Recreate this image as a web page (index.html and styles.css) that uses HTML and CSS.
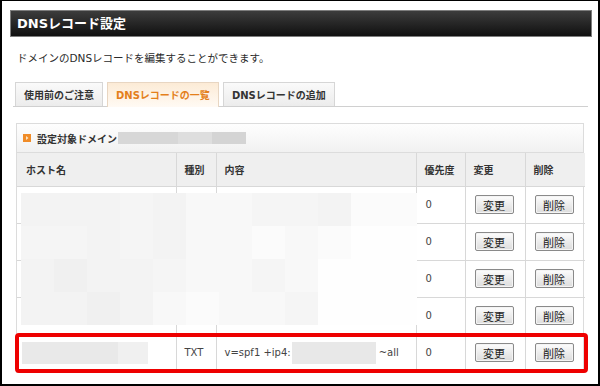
FILE: index.html
```html
<!DOCTYPE html>
<html lang="ja">
<head>
<meta charset="utf-8">
<title>DNSレコード設定</title>
<link rel="stylesheet" href="styles.css">
</head>
<body>
<div class="page">
  <h1 class="title">DNSレコード設定</h1>
  <p class="desc">ドメインのDNSレコードを編集することができます。</p>
  <div class="tabs">
    <span class="tab">使用前のご注意</span>
    <span class="tab active">DNSレコードの一覧</span>
    <span class="tab">DNSレコードの追加</span>
  </div>
  <div class="panel">
    <div class="domain">
      <svg class="mark" width="8" height="8" viewBox="0 0 8 8"><rect x="0" y="0" width="8" height="8" fill="#f08c28"/><path d="M3 2 L5.5 4 L3 6 Z" fill="#ffe3c2"/></svg>
      <span class="domain-label">設定対象ドメイン</span>
      <span class="redact"><span class="r1"></span><span class="r2"></span><span class="r3"></span></span>
    </div>
    <table class="records">
      <colgroup>
        <col class="c-host"><col class="c-type"><col class="c-val"><col class="c-prio"><col class="c-edit"><col class="c-del">
      </colgroup>
      <thead>
        <tr><th>ホスト名</th><th>種別</th><th>内容</th><th>優先度</th><th>変更</th><th>削除</th></tr>
      </thead>
      <tbody>
        <tr><td></td><td></td><td></td><td class="num">0</td><td><button class="btn">変更</button></td><td><button class="btn">削除</button></td></tr>
        <tr><td></td><td></td><td></td><td class="num">0</td><td><button class="btn">変更</button></td><td><button class="btn">削除</button></td></tr>
        <tr><td></td><td></td><td></td><td class="num">0</td><td><button class="btn">変更</button></td><td><button class="btn">削除</button></td></tr>
        <tr><td></td><td></td><td></td><td class="num">0</td><td><button class="btn">変更</button></td><td><button class="btn">削除</button></td></tr>
        <tr>
          <td><span class="hostblur"><span class="h1"></span><span class="h2"></span></span></td>
          <td class="txt">TXT</td>
          <td class="txt"><span class="spf">v=spf1 +ip4:<span class="ipblur"></span>~all</span></td>
          <td class="num">0</td>
          <td><button class="btn">変更</button></td>
          <td><button class="btn">削除</button></td>
        </tr>
      </tbody>
    </table>
    <div class="mosaic">
      <i class="g2"></i><i class="g2"></i><i class="g2"></i><i class="g3"></i><i class="g2"></i><i class="g4"></i><i class="g4"></i><i class="g3"></i><i class="g3"></i><i class="g2"></i><i class="g5"></i><i class="g5"></i>
      <i class="g3"></i><i class="g3"></i><i class="g2"></i><i class="g3"></i><i class="g2"></i><i class="g4"></i><i class="g4"></i><i class="g5"></i><i class="g4"></i><i class="g5"></i><i class="g6"></i><i class="g6"></i>
      <i class="g2"></i><i class="g1"></i><i class="g2"></i><i class="g2"></i><i class="g3"></i><i class="g4"></i><i class="g4"></i><i class="g3"></i><i class="g4"></i><i class="g6"></i><i class="g6"></i><i class="g6"></i>
      <i class="g2"></i><i class="g2"></i><i class="g1"></i><i class="g2"></i><i class="g4"></i><i class="g5"></i><i class="g4"></i><i class="g4"></i><i class="g3"></i><i class="g6"></i><i class="g6"></i><i class="g6"></i>
    </div>
    <div class="highlight"></div>
  </div>
</div>
</body>
</html>
```
FILE: styles.css
```css
* { box-sizing: border-box; }
html, body { margin: 0; padding: 0; background: #fff; }
body {
  width: 600px;
  height: 386px;
  border: 2px solid #000;
  border-top-width: 1px;
  font-family: "DejaVu Sans", "Noto Sans CJK JP", sans-serif;
  font-size: 10px;
  color: #333;
  overflow: hidden;
}
.page {
  padding: 9px 6px 0 8px;
}
.title {
  margin: 0;
  height: 27px;
  line-height: 25px;
  padding-left: 6px;
  border: 1px solid #7d7d7d;
  background: linear-gradient(#3c3c3c, #101010);
  color: #fff;
  font-size: 13px;
  font-weight: bold;
}
.desc {
  margin: 15px 0 0 0;
  padding-left: 7px;
  line-height: 12px;
  font-size: 10.5px;
  color: #2a2a2a;
}
.tabs {
  margin: 18px 4px 0 3px;
  padding-left: 2px;
  display: flex;
  gap: 4px;
  border-bottom: 1px solid #d0d0d0;
  height: 25px;
  align-items: flex-end;
}
.tab {
  height: 24px;
  line-height: 23px;
  padding: 1px 8px 0 8px;
  border: 1px solid #d6d6d6;
  border-bottom: none;
  background: linear-gradient(#fafafa, #ececec);
  font-weight: bold;
  color: #333;
  font-size: 10px;
}
.tab.active {
  background: linear-gradient(#fcebd6, #fffaf4);
  border-color: #e8d6c2;
  color: #e47f1b;
  height: 25px;
  margin-bottom: -1px;
  padding-top: 1px;
  line-height: 24px;
}
.panel {
  position: relative;
  margin: 16px 8px 0 6px;
  border: 1px solid #dcdcdc;
}
.domain {
  height: 29px;
  display: flex;
  align-items: center;
  padding-left: 6px;
  background: linear-gradient(#fefefe, #f1f1f1);
  border-bottom: 1px solid #dcdcdc;
  font-weight: bold;
}
.mark { margin-right: 6px; }
.domain-label { color: #333; }
.redact { display: flex; height: 12px; margin-left: 1px; }
.redact .r1 { width: 60px; background: #d7d7d7; }
.redact .r2 { width: 34px; background: #dedede; }
.redact .r3 { width: 34px; background: #d4d4d4; }
.records {
  width: 100%;
  border-collapse: collapse;
  table-layout: fixed;
}
.c-host { width: 159px; }
.c-type { width: 40px; }
.c-val { width: 200px; }
.c-prio { width: 49px; }
.c-edit { width: 60px; }
.c-del { width: 60px; }
.records th {
  height: 33px;
  background: #efefef;
  text-align: left;
  font-weight: bold;
  padding: 0 0 0 8px;
  border-left: 1px solid #d8d8d8;
  border-bottom: 1px solid #d8d8d8;
  color: #333;
}
.records th:first-child { padding-left: 9px; }
.records td {
  height: 37px;
  padding: 0 0 0 8px;
  border-left: 1px solid #d8d8d8;
  border-bottom: 1px solid #d8d8d8;
  color: #444;
}
.records th:first-child, .records td:first-child { border-left: none; }
.records td.num { padding-left: 9px; }
.records td:nth-child(5), .records td:nth-child(6) { padding-left: 9px; }
.btn {
  font-family: "Noto Sans CJK JP", sans-serif;
  font-size: 11px;
  width: 39px;
  height: 19px;
  padding: 0;
  line-height: 16px;
  border: 1px solid #8a8a8a;
  border-radius: 2px;
  background: linear-gradient(#fdfdfd, #dcdcdc);
  color: #222;
  box-shadow: inset 0 0 0 1px #f4f4f4;
}
.hostblur { display: flex; height: 22px; margin-left: -3px; }
.hostblur .h1 { width: 96px; background: #e9e9e9; }
.hostblur .h2 { width: 30px; background: #f0f0f0; }
.spf { display: flex; align-items: center; white-space: nowrap; }
.ipblur { display: inline-block; width: 84px; height: 22px; background: #e8e8e8; margin: 0 3px 0 1px; }
.mosaic {
  position: absolute;
  left: 4px;
  top: 69px;
  width: 396px;
  height: 132px;
  display: grid;
  grid-template-columns: repeat(12, 33px);
  grid-template-rows: repeat(4, 33px);
}
.mosaic i { display: block; }
.g1 { background: #f0f0f0; }
.g2 { background: #f3f3f3; }
.g3 { background: #f5f5f5; }
.g4 { background: #f8f8f8; }
.g5 { background: #fbfbfb; }
.g6 { background: #fefefe; }
.highlight {
  position: absolute;
  left: -2px;
  top: 209px;
  width: 573px;
  height: 40px;
  border: 4px solid #ee0000;
  border-radius: 4px;
}
```
